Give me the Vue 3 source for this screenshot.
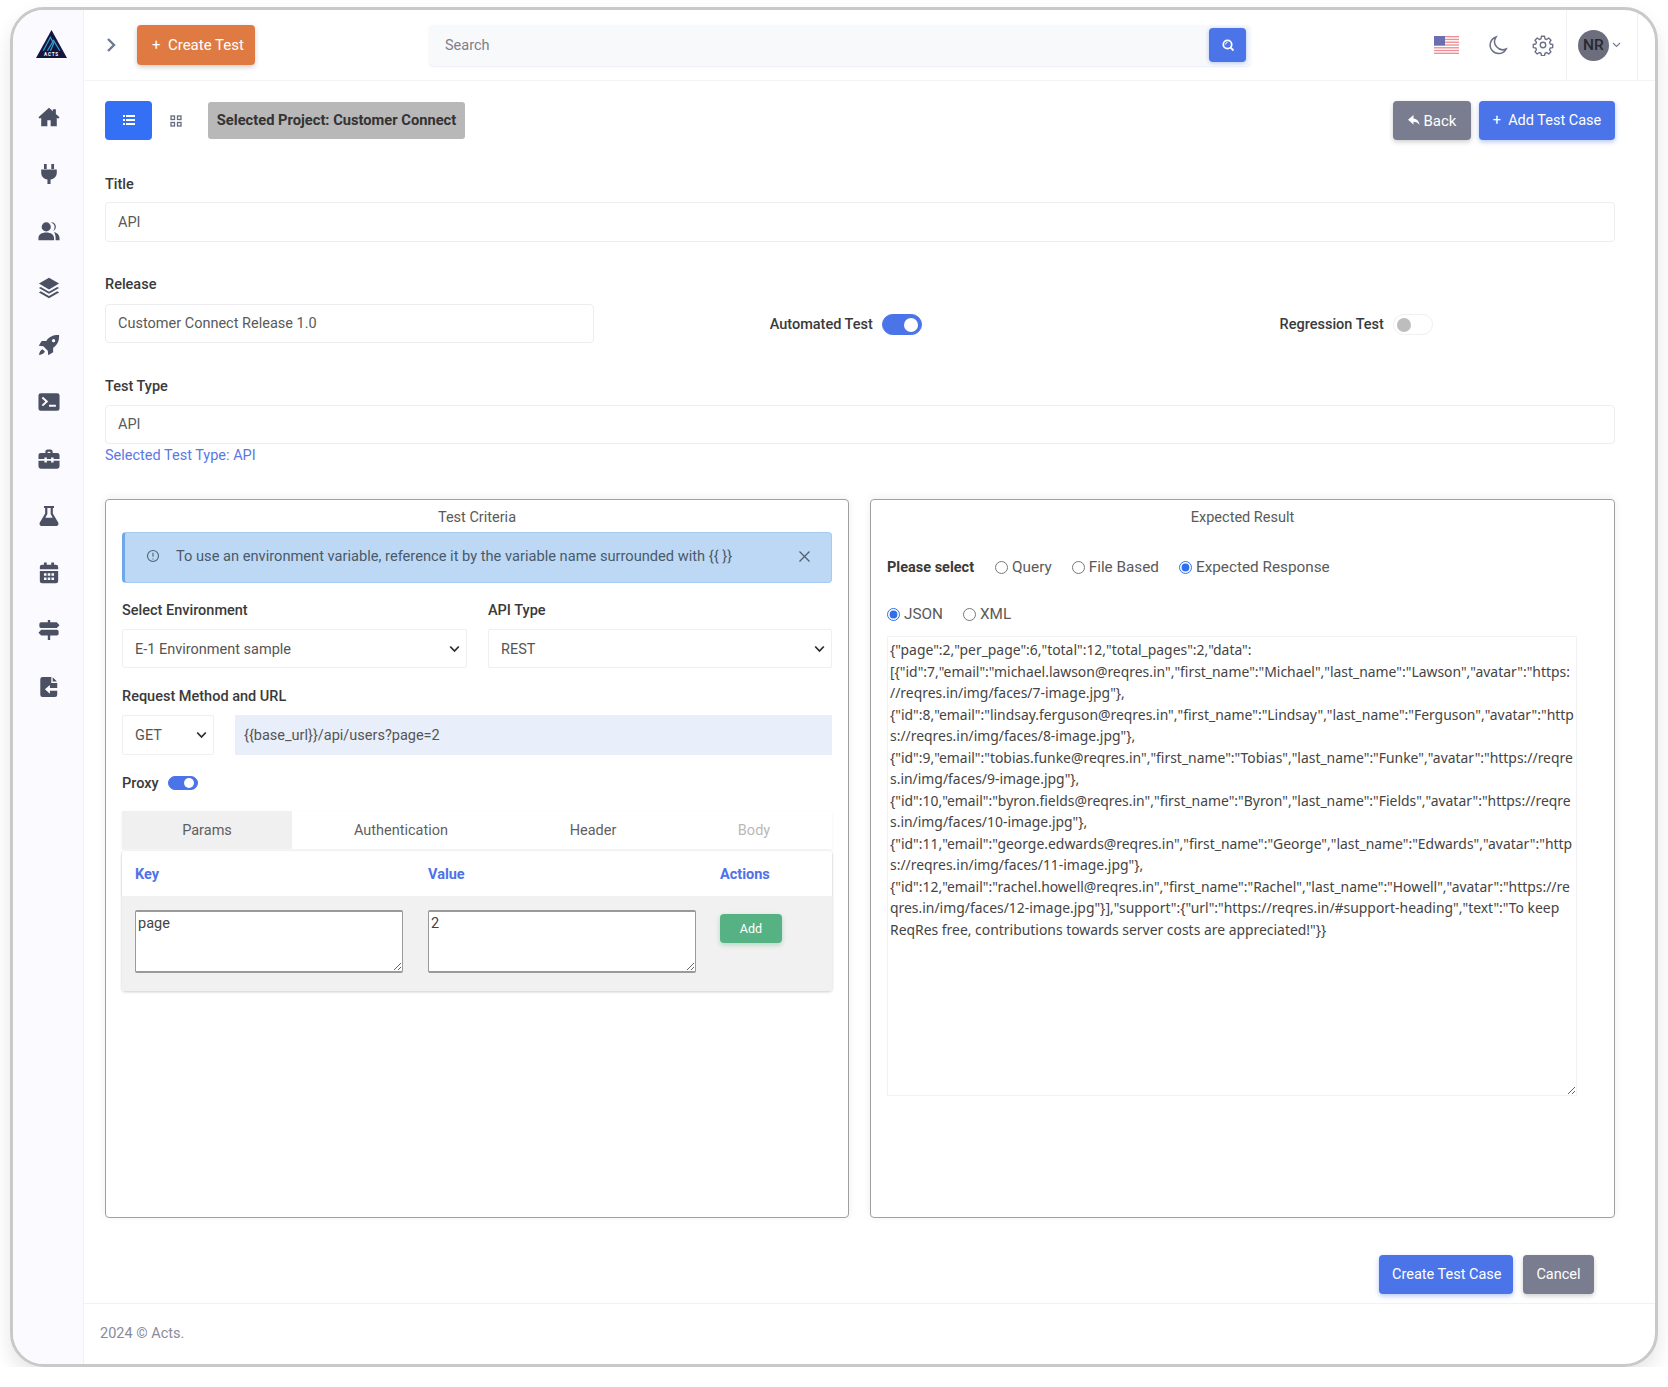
<script setup>
const navIcons = [
  'M12 2 .5 12.300l1.500 1.700L3.500 12.700V22h6.700v-6.500h3.600V22h6.700v-9.300l1.500 1.300 1.500-1.700L19.500 8.700V3.500h-3.300v2.200z',
  'M6.500 1h3v5.500h-3zM14.500 1h3v5.500h-3zM3.500 7h17v3.500c0 3.800-2.600 6.700-6.800 7.400V23h-3.400v-5.100C6.100 17.200 3.500 14.300 3.500 10.500z',
  'M9 2.500a5 5 0 1 1 0 10 5 5 0 0 1 0-10zM.5 22v-2c0-4.300 3.400-6.500 8.500-6.500s8.500 2.200 8.500 6.500v2zM14 2.400c3-.4 5.500 1.800 5.500 5 0 2-1.100 3.800-3 4.600 1.100-1.400 1.600-3 1.600-4.600 0-1.900-1.300-3.900-4.100-5zM17.500 13c3.800.9 6 3.600 6 7v2h-4.300v-2c0-2.800-.4-5-1.700-7z',
  'M12 .8 23 7.200 12 13.600 1 7.200zM3 10.800 12 16l9-5.200 2 1.200-11 6.400L1 12zM3 15.600 12 20.800l9-5.200 2 1.200-11 6.400L1 16.800z',
  'M23 1c-6-.3-10.800 1.700-14 6.500H4L.8 12.800l5 .5 4.900 4.900.5 5 5.300-3.200V15c4.800-3.200 6.800-8 6.500-14zM17 5.500a1.800 1.800 0 1 1 0 3.600 1.800 1.800 0 0 1 0-3.600zM5 16.500c-2.200.8-3.300 2.800-4 6.500 3.700-.7 5.700-1.800 6.500-4z',
  'M3 2.500h18A2.500 2.500 0 0 1 23.500 5v14a2.500 2.500 0 0 1-2.500 2.500H3A2.500 2.500 0 0 1 .5 19V5A2.500 2.500 0 0 1 3 2.500zM4 7.800l4 3.700-4 3.700 1.500 1.500 5.700-5.200L5.500 6.300zM12 15v2.300h7.500V15z',
  'M8 5.500V4A2.500 2.500 0 0 1 10.500 1.500h3A2.500 2.500 0 0 1 16 4v1.500h5A2.500 2.500 0 0 1 23.500 8v4h-6.500v-1.700h-2.700V12H9.700v-1.700H7V12H.5V8A2.500 2.500 0 0 1 3 5.500zM10.500 5.500h3V4h-3zM.5 14h6.500v1.700h2.700V14h4.600v1.700H17V14h6.500v6A2.500 2.500 0 0 1 21 22.500H3A2.500 2.500 0 0 1 .5 20z',
  'M6.500 1h11v2.300h-1.300v5.900l5.800 10c.9 1.700-.2 3.800-2.200 3.800H4.200c-2 0-3.100-2.100-2.200-3.800l5.800-10V3.300H6.500zM10.200 3.300v6.500L8 14h8l-2.200-4.200V3.300z',
  'M6.500 .5h3V3h5V.5h3V3h2A2.500 2.500 0 0 1 22 5.500V8H2V5.500A2.500 2.500 0 0 1 4.500 3h2zM2 9.800h20v11A2.500 2.500 0 0 1 19.500 23.300h-15A2.500 2.500 0 0 1 2 20.800zM6.500 12.300v2.700h2.800v-2.700zM10.600 12.300v2.700h2.800v-2.700zM14.700 12.300v2.700h2.800v-2.700zM6.500 16.800v2.700h2.800v-2.700zM10.600 16.800v2.700h2.800v-2.700zM14.700 16.800v2.700h2.800v-2.700z',
  'M10.700 1h2.600v2.500H20.500L23.500 6.700l-3 3.200H3.500A2 2 0 0 1 1.500 7.900V5.500a2 2 0 0 1 2-2h7.200zM3.500 11.700h17a2 2 0 0 1 2 2v2.400a2 2 0 0 1-2 2h-7.200V23h-2.600v-4.900H3.500L.5 15z',
  'M5 1h9.500v6.500H21V20.500A2.500 2.500 0 0 1 18.500 23H5A2.500 2.500 0 0 1 2.500 20.500V3.500A2.500 2.500 0 0 1 5 1zM16 1.300 20.700 6H16zM7.500 14.500 13 9.700v3.300h8v3h-8v3.300z'
]
const stripes = [0, 1, 2, 3, 4, 5, 6]
const expected = `{"page":2,"per_page":6,"total":12,"total_pages":2,"data":
[{"id":7,"email":"michael.lawson@reqres.in","first_name":"Michael","last_name":"Lawson","avatar":"https:
//reqres.in/img/faces/7-image.jpg"},
{"id":8,"email":"lindsay.ferguson@reqres.in","first_name":"Lindsay","last_name":"Ferguson","avatar":"http
s://reqres.in/img/faces/8-image.jpg"},
{"id":9,"email":"tobias.funke@reqres.in","first_name":"Tobias","last_name":"Funke","avatar":"https://reqre
s.in/img/faces/9-image.jpg"},
{"id":10,"email":"byron.fields@reqres.in","first_name":"Byron","last_name":"Fields","avatar":"https://reqre
s.in/img/faces/10-image.jpg"},
{"id":11,"email":"george.edwards@reqres.in","first_name":"George","last_name":"Edwards","avatar":"http
s://reqres.in/img/faces/11-image.jpg"},
{"id":12,"email":"rachel.howell@reqres.in","first_name":"Rachel","last_name":"Howell","avatar":"https://re
qres.in/img/faces/12-image.jpg"}],"support":{"url":"https://reqres.in/#support-heading","text":"To keep
ReqRes free, contributions towards server costs are appreciated!"}}`
</script>

<template>
  <div class="frame">
    <aside class="sidebar">
      <div class="logo">
        <svg width="31" height="28" viewBox="0 0 30 27">
          <path d="M15 0 30 27H0z" fill="#15163f" />
          <path d="M7 20 14 7l3 6-3 7M11 20l6-10 6 10" fill="none" stroke="#2f9fd0" stroke-width="1.200" />
          <text x="15" y="25.500" text-anchor="middle" class="logo-text">ACTS</text>
        </svg>
      </div>
      <nav class="nav">
        <svg v-for="(d, i) in navIcons" :key="i" class="nav-icon" viewBox="0 0 24 24"><path :d="d" fill-rule="evenodd" /></svg>
      </nav>
    </aside>

    <div class="main">
      <header class="topbar">
        <svg class="collapse" width="12" height="16" viewBox="0 0 12 16"><path d="M3 2l6 6-6 6" fill="none" stroke="#6f7a91" stroke-width="2.400" /></svg>
        <button class="btn btn-orange create">+&nbsp; Create Test</button>
        <div class="search">
          <span class="search-text">Search</span>
          <button class="search-btn" aria-label="Search">
            <svg width="14" height="14" viewBox="0 0 14 14"><circle cx="6.500" cy="6.500" r="4.200" fill="none" stroke="#fff" stroke-width="1.800" /><path d="M4.500 6.500a2 2 0 0 1 2-2" stroke="#fff" fill="none" /><path d="M9.700 9.700 12.500 12.500" stroke="#fff" stroke-width="1.800" /></svg>
          </button>
        </div>
        <svg class="flag" width="25" height="18" viewBox="0 0 25 18">
          <rect width="25" height="18" fill="#fff" />
          <rect v-for="s in stripes" :key="s" x="0" :y="s * 2.77" width="25" height="1.380" fill="#ee8f96" />
          <rect width="11" height="9.500" fill="#6b6fb0" />
        </svg>
        <svg class="moon" width="20" height="20" viewBox="0 0 20 20"><path d="M8 2a8.200 8.200 0 0 0 10.200 12A8.500 8.500 0 1 1 8 2z" fill="none" stroke="#6c7086" stroke-width="1.500" /></svg>
        <svg class="gear" width="22" height="22" viewBox="0 0 24 24" fill="none" stroke="#6c7086" stroke-width="1.500" stroke-linejoin="round"><circle cx="12" cy="12" r="3" /><path d="M10.300 2.500h3.400l.5 2.700 1.800.8 2.300-1.600 2.400 2.400-1.600 2.300.8 1.800 2.700.5v3.400l-2.700.5-.8 1.800 1.600 2.300-2.400 2.400-2.300-1.600-1.800.8-.5 2.700h-3.400l-.5-2.700-1.800-.8-2.300 1.600-2.400-2.400 1.600-2.300-.8-1.800-2.700-.5v-3.400l2.700-.5.8-1.800-1.600-2.300 2.400-2.400 2.300 1.600 1.800-.8z" /></svg>
        <div class="user">
          <span class="avatar">NR</span>
          <svg width="9" height="6" viewBox="0 0 9 6"><path d="M1 1l3.500 3.500L8 1" fill="none" stroke="#7a7c8f" stroke-width="1.200" /></svg>
        </div>
      </header>

      <main class="content">
        <div class="toolbar">
          <div class="toolbar-left">
            <button class="view-btn" aria-label="List view">
              <svg width="12" height="10" viewBox="0 0 12 10" fill="#fff"><rect x="0" y="0" width="2" height="2" /><rect x="3" y="0" width="9" height="2" /><rect x="0" y="4" width="2" height="2" /><rect x="3" y="4" width="9" height="2" /><rect x="0" y="8" width="2" height="2" /><rect x="3" y="8" width="9" height="2" /></svg>
            </button>
            <svg class="grid-icon" width="12" height="12" viewBox="0 0 12 12" fill="none" stroke="#666b7e" stroke-width="1.300"><rect x="1" y="1" width="3.500" height="3.500" /><rect x="7.500" y="1" width="3.500" height="3.500" /><rect x="1" y="7.500" width="3.500" height="3.500" /><rect x="7.500" y="7.500" width="3.500" height="3.500" /></svg>
            <span class="chip">Selected Project: Customer Connect</span>
          </div>
          <div class="toolbar-right">
            <button class="btn btn-grey back">
              <svg width="12" height="11" viewBox="0 0 12 11"><path d="M5.500 0 0 4.800l5.500 4.700V6.700c2.500 0 4.500.8 6 3.300-.3-3.700-2.500-6.300-6-6.600z" fill="#fff" /></svg>
              Back
            </button>
            <button class="btn btn-blue add">+&nbsp; Add Test Case</button>
          </div>
        </div>

        <label class="label title-label">Title</label>
        <input class="field title-field" value="API" readonly />

        <div class="release-row">
          <div>
            <label class="label">Release</label>
            <input class="field" value="Customer Connect Release 1.0" readonly />
          </div>
          <div class="switch-cell">
            <span class="label-inline">Automated Test</span>
            <span class="toggle on large"></span>
          </div>
          <div class="switch-cell">
            <span class="label-inline">Regression Test</span>
            <span class="toggle large"></span>
          </div>
        </div>

        <label class="label type-label">Test Type</label>
        <input class="field" value="API" readonly />
        <div class="helper">Selected Test Type: API</div>

        <div class="panels">
          <section class="panel left">
            <h3 class="panel-title">Test Criteria</h3>
            <div class="alert">
              <svg width="14" height="14" viewBox="0 0 14 14" fill="none" stroke="#4d6273" stroke-width="1.100"><circle cx="7" cy="7" r="5.500" /><path d="M7 3.800v4M7 9.400v1" /></svg>
              <span class="alert-text">To use an environment variable, reference it by the variable name surrounded with {{ '{' }}{{ '{' }} {{ '}' }}{{ '}' }}</span>
              <svg class="alert-x" width="13" height="13" viewBox="0 0 13 13" stroke="#52606e" stroke-width="1.300"><path d="M1.500 1.500l10 10M11.500 1.500l-10 10" /></svg>
            </div>
            <div class="two-col">
              <div>
                <label class="label sel-label">Select Environment</label>
                <div class="sel">
                  <select class="select"><option>E-1 Environment sample</option></select>
                  <svg class="chev" width="11" height="8" viewBox="0 0 11 8"><path d="M1.200 1.500 5.500 6l4.300-4.500" fill="none" stroke="#2e2e2e" stroke-width="1.800" /></svg>
                </div>
              </div>
              <div>
                <label class="label sel-label">API Type</label>
                <div class="sel">
                  <select class="select"><option>REST</option></select>
                  <svg class="chev" width="11" height="8" viewBox="0 0 11 8"><path d="M1.200 1.500 5.500 6l4.300-4.500" fill="none" stroke="#2e2e2e" stroke-width="1.800" /></svg>
                </div>
              </div>
            </div>
            <label class="label req-label">Request Method and URL</label>
            <div class="url-row">
              <div class="sel method">
                <select class="select"><option>GET</option></select>
                <svg class="chev" width="11" height="8" viewBox="0 0 11 8"><path d="M1.200 1.500 5.500 6l4.300-4.500" fill="none" stroke="#2e2e2e" stroke-width="1.800" /></svg>
              </div>
              <input class="url" :value="'{{base_url}}/api/users?page=2'" readonly />
            </div>
            <div class="proxy">
              <span class="label-inline">Proxy</span>
              <span class="toggle on small"></span>
            </div>
            <div class="tabs">
              <span class="tab active">Params</span>
              <span class="tab">Authentication</span>
              <span class="tab">Header</span>
              <span class="tab disabled">Body</span>
            </div>
            <div class="table">
              <div class="table-head">
                <span>Key</span><span>Value</span><span>Actions</span>
              </div>
              <div class="table-row">
                <textarea class="cell" readonly>page</textarea>
                <textarea class="cell" readonly>2</textarea>
                <button class="btn btn-green">Add</button>
              </div>
            </div>
          </section>

          <section class="panel right">
            <h3 class="panel-title">Expected Result</h3>
            <div class="radio-row select-row">
              <span class="label-inline strong">Please select</span>
              <label class="radio"><input type="radio" name="kind" />Query</label>
              <label class="radio"><input type="radio" name="kind" />File Based</label>
              <label class="radio"><input type="radio" name="kind" checked />Expected Response</label>
            </div>
            <div class="radio-row format-row">
              <label class="radio"><input type="radio" name="fmt" checked />JSON</label>
              <label class="radio"><input type="radio" name="fmt" />XML</label>
            </div>
            <textarea class="expected" :value="expected" readonly></textarea>
          </section>
        </div>

        <div class="actions">
          <button class="btn btn-blue">Create Test Case</button>
          <button class="btn btn-grey">Cancel</button>
        </div>
      </main>

      <footer class="footer">2024 © Acts.</footer>
    </div>
  </div>
</template>

<style>
html, body { margin: 0; background: #fff; }
</style>

<style scoped>
* { box-sizing: border-box; }
.frame {
  width: 1648px; height: 1360px; margin: 7px 0 0 10px;
  border: 3px solid #c9c9c9; border-radius: 34px; overflow: hidden;
  display: flex; background: #fff;
  box-shadow: 0 10px 20px rgba(0,0,0,.1);
  font: 400 14.500px Roboto, "Liberation Sans", sans-serif; color: #5a5a5a;
}
.sidebar { width: 71px; flex: none; background: #fafaff; border-right: 1px solid #f0f0f5; }
.logo { height: 71px; display: flex; align-items: center; justify-content: center; padding-left: 7px; padding-bottom: 3px; }
.logo-text { font: 700 4.500px Roboto, sans-serif; fill: #fff; letter-spacing: .8px; }
.nav { display: flex; flex-direction: column; align-items: center; gap: 35px; padding: 25px 0 0 2px; }
.nav-icon { width: 22px; height: 22px; fill: #4c5063; }
.main { flex: 1; min-width: 0; display: flex; flex-direction: column; }
.topbar { height: 71px; flex: none; display: flex; align-items: center; border-bottom: 1px solid #f4f4f8; position: relative; }
.collapse { margin-left: 21px; flex: none; }
.btn { border: 0; border-radius: 4px; color: #fff; font: 400 14.500px Roboto, "Liberation Sans", sans-serif; height: 39px; padding: 0 13px; box-shadow: 0 2px 5px rgba(0,0,0,.2); white-space: nowrap; }
.btn-orange { background: #df7b42; }
.btn-blue { background: #4a74e8; box-shadow: 0 2px 5px rgba(74,116,232,.4); }
.btn-grey { background: #7a7c8f; }
.btn-green { background: #57b283; width: 62px; height: 29px; padding: 0; margin-top: 4px; font-size: 12.500px; box-shadow: 0 2px 5px rgba(87,178,131,.4); }
.create { width: 118px; height: 40px; margin-left: 20px; flex: none; font-size: 15px; padding-left: 15px; }
.search { width: 822px; height: 41px; margin-left: 174px; flex: none; display: flex; align-items: center; justify-content: space-between; background: #f8f9fb; border-radius: 4px; padding: 0 5px 0 16px; box-shadow: 0 1px 2px rgba(70,90,180,.1); }
.search-text { color: #7d7f89; }
.search-btn { width: 37px; height: 34px; border: 0; border-radius: 4px; background: #4a74e8; display: flex; align-items: center; justify-content: center; padding: 0; box-shadow: 0 1px 4px rgba(74,116,232,.4); }
.flag { margin-left: 183px; flex: none; }
.moon { margin-left: 29px; flex: none; }
.gear { margin-left: 24px; flex: none; }
.user { margin-left: 12px; width: 72px; height: 100%; flex: none; display: flex; align-items: center; gap: 3px; padding-left: 11px; border-left: 1px solid #f1f1f5; border-right: 1px solid #f1f1f5; }
.avatar { width: 31px; height: 31px; border-radius: 50%; background: #6c6e7e; color: #26282e; font-weight: 500; font-size: 15.500px; display: flex; align-items: center; justify-content: center; }
.content { flex: 1; padding: 20px 40px 0 21px; min-height: 0; }
.toolbar { display: flex; justify-content: space-between; align-items: center; height: 39px; }
.toolbar-left, .toolbar-right { display: flex; align-items: center; }
.view-btn { width: 47px; height: 39px; border: 0; border-radius: 4px; background: #3370f5; display: flex; align-items: center; justify-content: center; padding: 0 0 2px; }
.grid-icon { margin-left: 18px; }
.chip { margin-left: 26px; height: 37px; width: 257px; line-height: 37px; text-align: center; background: #b8b8b8; border-radius: 3px; color: #333; font-weight: 700; font-size: 14.700px; white-space: nowrap; }
.toolbar-right { gap: 8px; }
.back { width: 78px; display: flex; align-items: center; justify-content: center; gap: 4px; font-size: 15px; }
.add { width: 136px; }
.label { display: block; height: 20px; line-height: 20px; color: #3a3a3a; font-weight: 500; }
.title-label { margin-top: 35px; margin-bottom: 7px; }
.field { display: block; width: 100%; height: 39px; border: 1px solid #ececf1; border-radius: 4px; padding: 0 12px; font: inherit; color: #5a5a5a; background: #fff; outline: 0; }
.field.title-field { height: 40px; }
.release-row { display: grid; grid-template-columns: 489px 1fr 1fr; column-gap: 21px; margin-top: 33px; }
.release-row .label { margin-bottom: 9px; }
.switch-cell { display: flex; align-items: center; justify-content: center; gap: 9px; padding-top: 30px; padding-right: 28px; }
.label-inline { color: #3a3a3a; font-weight: 500; }
.toggle { display: inline-block; border-radius: 12px; position: relative; flex: none; background: #fff; border: 1px solid #eeeef3; }
.toggle::after { content: ""; position: absolute; border-radius: 50%; background: #bdbdbd; }
.toggle.on { background: #4a74e8; border-color: #4a74e8; }
.toggle.on::after { background: #fff; }
.toggle.large { width: 40px; height: 21px; }
.toggle.large::after { width: 14px; height: 14px; top: 3px; left: 3px; }
.toggle.large.on::after { left: auto; right: 3px; }
.toggle.small { width: 30px; height: 14px; }
.toggle.small::after { width: 10px; height: 10px; top: 1px; right: 3px; }
.type-label { margin-top: 34px; margin-bottom: 8px; }
.helper { height: 22px; padding-top: 2px; line-height: 20px; color: #5a78e6; }
.panels { display: grid; grid-template-columns: 744px 745px; column-gap: 21px; margin-top: 33px; height: 719px; }
.panel { border: 1px solid #a0a0a0; border-radius: 4px; padding: 6px 16px; box-shadow: 0 -1px 8px rgba(0,0,0,.07); background: #fff; }
.panel-title { margin: 0 0 4px; height: 22px; padding-top: 1px; text-align: center; font: 400 14.500px/22px Roboto, sans-serif; color: #5a5a5a; }
.alert { height: 51px; background: #bcd8f5; border: 1px solid #a5cbf1; border-left: 3px solid #6fa8e8; border-radius: 4px; display: flex; align-items: center; padding: 0 20px 3px 21px; gap: 16px; color: #4a5a68; font-size: 14.650px; }
.alert-text { flex: 1; white-space: nowrap; }
.two-col { display: grid; grid-template-columns: 345px 344px; column-gap: 21px; margin-top: 18px; }
.sel-label { margin-bottom: 8px; }
.sel { position: relative; }
.chev { position: absolute; right: 7px; top: 50%; margin-top: -4px; pointer-events: none; }
.select { display: block; appearance: none; width: 100%; height: 39px; border: 1px solid #efeff3; border-radius: 2px; background: #fff; font: inherit; color: #555; padding: 0 12px; outline: 0; line-height: 39px; }
.req-label { margin-top: 19px; margin-bottom: 8px; }
.url-row { display: flex; gap: 21px; }
.method { width: 92px; flex: none; }
.method .select { height: 40px; }
.url { flex: 1; height: 40px; border: 0; background: #e8eefa; font: inherit; color: #555; padding: 0 9px; outline: 0; }
.proxy { display: flex; align-items: center; gap: 9px; height: 20px; margin-top: 18px; }
.tabs { display: grid; grid-template-columns: 170px 218px 166px 156px; height: 38px; margin-top: 18px; box-shadow: 0 1px 3px rgba(0,0,0,.06); }
.tab { display: flex; align-items: center; justify-content: center; color: #5f5f5f; }
.tab.active { background: #f0f0f0; }
.tab.disabled { color: #b9b9b9; }
.table { margin-top: 2px; box-shadow: 0 1px 3px rgba(0,0,0,.2); border-radius: 3px; }
.table-head { height: 45px; display: grid; grid-template-columns: 293px 292px 1fr; align-items: center; padding: 1px 0 0 13px; color: #4f72e8; font-weight: 700; box-shadow: 0 1px 2px rgba(0,0,0,.08); }
.table-row { height: 95px; display: grid; grid-template-columns: 293px 292px 1fr; align-items: start; padding: 14px 0 0 13px; background: #f1f1f1; }
.cell { width: 268px; height: 63px; border: 1px solid #9a9a9a; border-radius: 2px; background: #fff; font: inherit; color: #444; padding: 3px 2px; outline: 0; border-top-width: 2px; border-bottom-width: 2px; }
.radio-row { display: flex; align-items: center; height: 20px; }
.select-row { margin-top: 29px; gap: 20px; }
.format-row { margin-top: 27px; gap: 20px; }
.strong { font-weight: 700; margin-right: 1px; }
.radio { display: flex; align-items: center; gap: 4px; color: #5a5a5a; font-size: 15.300px; }
.radio input { margin: 0; width: 13px; height: 13px; accent-color: #2f6fee; }
.expected { display: block; width: 690px; height: 460px; margin-top: 12px; border: 1px solid #f2f2f5; padding: 2px 2px; font: 400 13.920px/21.500px "Noto Sans", sans-serif; color: #444; white-space: pre; overflow: hidden; outline: 0; background: #fff; }
.actions { display: flex; justify-content: flex-end; gap: 10px; margin-top: 37px; padding-right: 21px; }
.actions .btn-blue { width: 134px; }
.actions .btn-grey { width: 71px; }
.footer { height: 61px; flex: none; border-top: 1px solid #f1f1f4; padding-left: 16px; line-height: 60px; color: #8a8b98; }
</style>
